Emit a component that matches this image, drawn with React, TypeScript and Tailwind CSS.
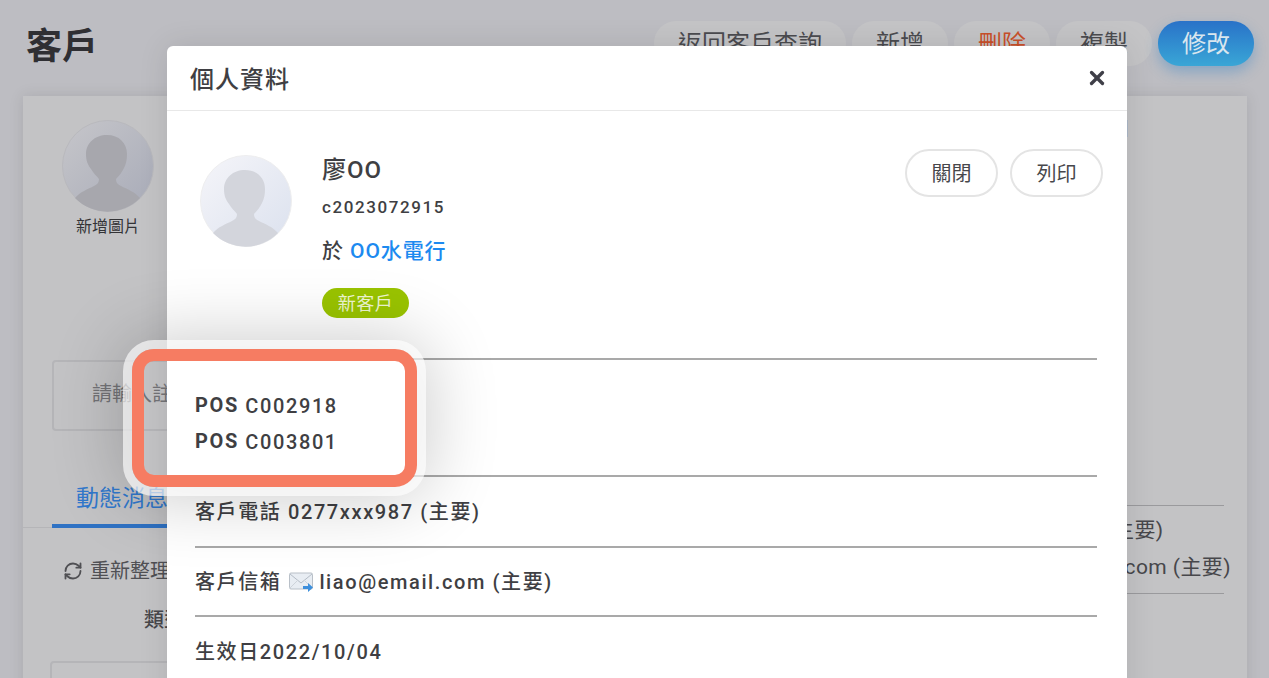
import React from 'react';
import { RefreshCw, X } from 'lucide-react';

const Avatar = ({ dim }: { dim?: boolean }) => (
  <svg viewBox="0 0 92 92" className="h-[92px] w-[92px] shrink-0">
    <defs>
      <linearGradient id={dim ? 'bgDim' : 'bgLight'} x1="0" y1="0" x2="1" y2="1">
        <stop offset="0" stopColor={dim ? '#c6c6ca' : '#f5f5f9'} />
        <stop offset="1" stopColor={dim ? '#a8abb8' : '#dbe1ee'} />
      </linearGradient>
    </defs>
    <circle cx="46" cy="46" r="45.5" fill={`url(#${dim ? 'bgDim' : 'bgLight'})`} stroke={dim ? '#b9b9bd' : '#eeeeef'} />
    <path
      d="M45 15c-12 0-21 8-21 19 0 7 2 11 5 15 2 4 6 7 8 10 0 3-1 5-5 7-6 3-14 6-19 12a45.500 45.500 0 0 0 65 0c-5-6-13-9-19-12-4-2-5-4-5-7 3-3 6-7 8-11 2-4 3-8 3-14 0-11-8-19-20-19z"
      fill={dim ? '#a7a7ad' : '#d3d5dc'}
    />
  </svg>
);

const MailIcon = () => (
  <svg viewBox="0 0 25 22" className="ml-[8px] mr-[5px] h-[22px] w-[25px] shrink-0">
    <rect x="0.500" y="2" width="23" height="16" rx="1.500" fill="#e8edf3" stroke="#b9c0c8" />
    <path d="M1 3l11 9 11-9" fill="none" stroke="#b4bcc6" />
    <path d="M1 17l8-8M23 17l-8-8" fill="none" stroke="#cdd3da" />
    <path d="M14 15h5v-3l5 4.500-5 4.500v-3h-5z" fill="#3d8fdc" />
  </svg>
);

const TopButton = ({ label, className }: { label: string; className?: string }) => (
  <button className={`flex h-[45px] w-[96px] items-center justify-center rounded-[22px] bg-[#c4c4c6] text-[24px] text-[#4b4b4f] ${className ?? ''}`}>
    {label}
  </button>
);

const Row = ({ height, children }: { height: number; children?: React.ReactNode }) => (
  <div className="flex items-center border-b-2 border-[#a9a9a9] font-medium" style={{ height }}>
    {children}
  </div>
);

export default function App() {
  return (
    <div
      className="relative h-[678px] w-[1269px] overflow-hidden bg-[#bdbdc2] text-[#3f3f43]"
      style={{ fontFamily: 'Roboto, "Noto Sans CJK TC", sans-serif' }}
    >
      {/* page behind the dialog */}
      <div className="flex h-[96px] items-start justify-between pl-[26px] pr-[15px] pt-[21px]">
        <h1 className="text-[36px] font-bold leading-[52px] text-[#2f2f33]">客戶</h1>
        <div className="flex gap-[6px]">
          <TopButton label="返回客戶查詢" className="w-[192px]" />
          <TopButton label="新增" />
          <TopButton label="刪除" className="text-[#c9502a]" />
          <TopButton label="複製" />
          <TopButton
            label="修改"
            className="bg-gradient-to-b from-[#2a72c8] to-[#3aa6d6] text-[#d9e6ee] shadow-[0_6px_14px_rgba(50,130,200,0.4)]"
          />
        </div>
      </div>

      <div className="mx-[23px] flex h-[600px] w-[1224px] bg-[#c3c3c5] shadow-[0_0_14px_rgba(0,0,0,0.1)]">
        <div className="w-[500px]">
          <div className="ml-[39px] mt-[24px] flex w-[92px] flex-col items-center">
            <Avatar dim />
            <span className="mt-[5px] text-[16px] leading-[20px] text-[#333336]">新增圖片</span>
          </div>
          <div className="ml-[29px] mt-[123px] flex h-[71px] w-[300px] items-center rounded-[4px] border-2 border-[#b5b5b8] pb-[3px] pl-[38px] text-[20px] text-[#737377]">
            請輸入註記
          </div>
          <div className="mt-[49px] h-[48px] border-b border-[#b5b5b8] pl-[29px]">
            <div className="h-[48px] w-[200px] border-b-4 border-[#2f72c4] pl-[24px] text-[23px] leading-[38px] text-[#3178cc]">
              動態消息
            </div>
          </div>
          <div className="ml-[40px] mt-[28px] flex items-center gap-[7px] text-[20px] leading-[30px] text-[#505054]">
            <RefreshCw size={20} strokeWidth={2.2} />
            重新整理
          </div>
          <div className="ml-[121px] mt-[19px] text-[20px] font-medium leading-[30px] text-[#47474b]">類型</div>
          <div className="ml-[27px] mt-[26px] h-[60px] w-[300px] rounded-[4px] border-2 border-[#b5b5b8]" />
        </div>

        <div className="ml-auto mr-[23px] flex w-[400px] flex-col">
          <div className="ml-[298px] mt-[24px] h-[17px] w-[6px] bg-[#adb8c8]" />
          <div className="mt-[368px] h-[89px] border-y border-[#9a9a9d] pl-[187px] pt-[6px] text-[21px] leading-[37px] tracking-[0.4px] text-[#47474b]">
            <div className="-ml-[29px] whitespace-nowrap">0277xxx987 (主要)</div>
            <div className="whitespace-nowrap">liao@email.com (主要)</div>
          </div>
        </div>
      </div>

      {/* dialog */}
      <div className="absolute left-[167px] top-[46px] h-[700px] w-[960px] rounded-t-[6px] bg-white shadow-[0_0_30px_rgba(0,0,0,0.1)]">
        <div className="flex h-[65px] items-center justify-between border-b border-[#e8e8e8] pl-[23px] pr-[19px]">
          <h2 className="mt-[3px] text-[24px] font-medium tracking-[1px] text-[#3f3f43]">個人資料</h2>
          <X size={22} strokeWidth={3.6} className="text-[#3f3f48]" />
        </div>

        <div className="flex px-[33px] pt-[44px]">
          <Avatar />
          <div className="ml-[30px] flex-1">
            <div className="text-[24px] font-medium leading-[30px] tracking-[1px]">廖OO</div>
            <div className="mt-[10px] text-[17px] font-medium leading-[24px] tracking-[1.6px]">c2023072915</div>
            <div className="mt-[17px] text-[21px] font-medium leading-[30px] tracking-[0.9px]">
              於 <span className="text-[#1c8af0]">OO水電行</span>
            </div>
            <span className="mt-[22px] inline-flex h-[30px] w-[87px] items-center justify-center rounded-full bg-[#9ac400] text-[18px] tracking-[0.5px] text-[#eef6d0]">
              新客戶
            </span>
          </div>
          <div className="-mr-[9px] -mt-[6px] flex gap-[12px]">
            <button className="h-[48px] w-[93px] rounded-[24px] border-2 border-[#e4e4e4] pt-[1px] text-[20px] text-[#47474b]">關閉</button>
            <button className="h-[48px] w-[93px] rounded-[24px] border-2 border-[#e4e4e4] pt-[1px] text-[20px] text-[#47474b]">列印</button>
          </div>
        </div>

        <div className="ml-[28px] mt-[40px] w-[902px] text-[20px] tracking-[1.6px] text-[#3f3f43]">
          <div className="border-t-2 border-[#a9a9a9]" />
          <div className="flex h-[117px] flex-col justify-center gap-[6px] border-b-2 border-[#a9a9a9] pt-[12px] font-medium leading-[30px]">
            <div><b className="inline-block -translate-y-px font-bold">POS</b> C002918</div>
            <div><b className="inline-block -translate-y-px font-bold">POS</b> C003801</div>
          </div>
          <Row height={71}>客戶電話 0277xxx987 (主要)</Row>
          <Row height={69}>
            客戶信箱
            <MailIcon />
            liao@email.com (主要)
          </Row>
          <div className="flex h-[70px] items-center font-medium">生效日2022/10/04</div>
        </div>
      </div>

      {/* highlight frame */}
      <div className="absolute left-[132px] top-[349px] h-[138px] w-[285px] rounded-[22px] border-[12px] border-[#f67c62] shadow-[0_0_0_9px_rgba(255,255,255,0.65),0_0_70px_12px_rgba(0,0,0,0.2)]" />
    </div>
  );
}
